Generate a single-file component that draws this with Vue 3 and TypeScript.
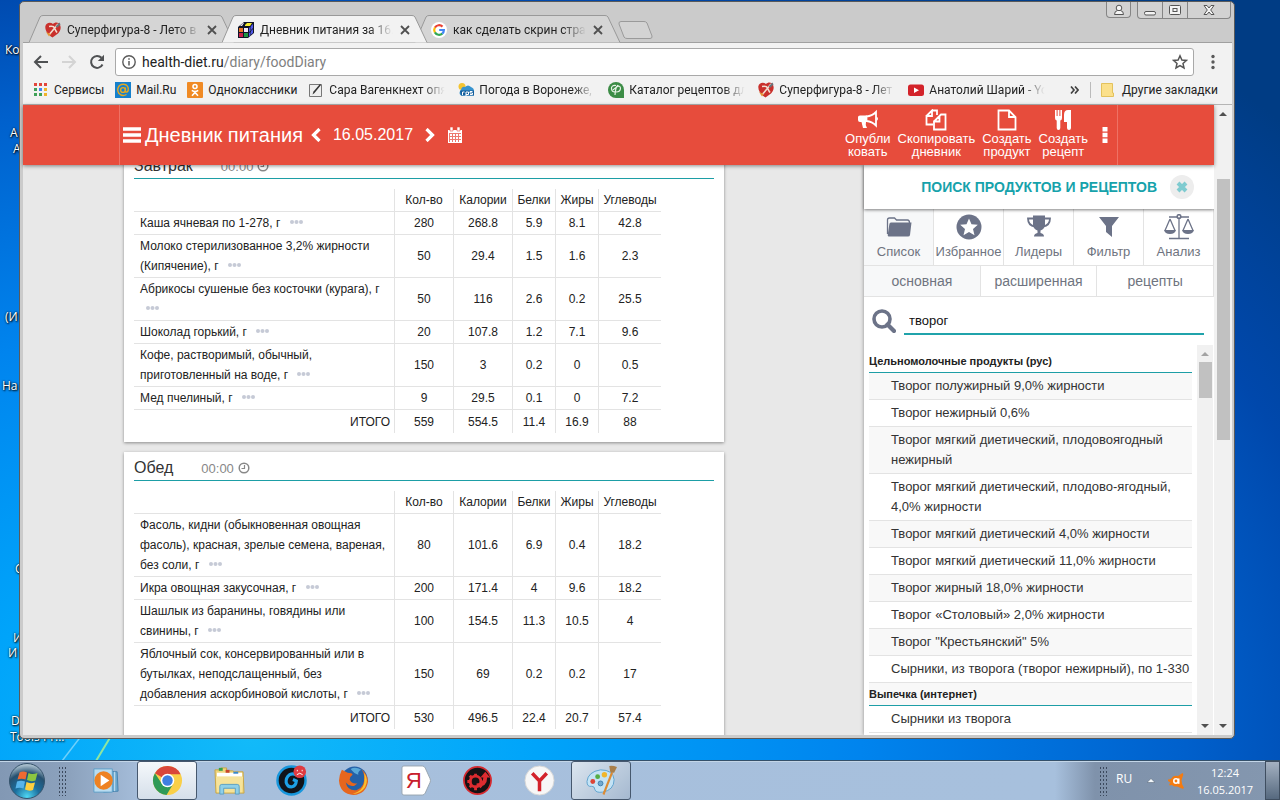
<script setup lang="ts">
import { ref } from 'vue'

interface Food { name: string; v: string[] }
interface Meal { title: string; foods: Food[]; total: string[] }

const columns = ['Кол-во', 'Калории', 'Белки', 'Жиры', 'Углеводы']

const meals: Meal[] = [
  {
    title: 'Завтрак',
    foods: [
      { name: 'Каша ячневая по 1-278, г', v: ['280', '268.8', '5.9', '8.1', '42.8'] },
      { name: 'Молоко стерилизованное 3,2% жирности (Кипячение), г', v: ['50', '29.4', '1.5', '1.6', '2.3'] },
      { name: 'Абрикосы сушеные без косточки (курага), г', v: ['50', '116', '2.6', '0.2', '25.5'] },
      { name: 'Шоколад горький, г', v: ['20', '107.8', '1.2', '7.1', '9.6'] },
      { name: 'Кофе, растворимый, обычный, приготовленный на воде, г', v: ['150', '3', '0.2', '0', '0.5'] },
      { name: 'Мед пчелиный, г', v: ['9', '29.5', '0.1', '0', '7.2'] },
    ],
    total: ['559', '554.5', '11.4', '16.9', '88'],
  },
  {
    title: 'Обед',
    foods: [
      { name: 'Фасоль, кидни (обыкновенная овощная фасоль), красная, зрелые семена, вареная, без соли, г', v: ['80', '101.6', '6.9', '0.4', '18.2'] },
      { name: 'Икра овощная закусочная, г', v: ['200', '171.4', '4', '9.6', '18.2'] },
      { name: 'Шашлык из баранины, говядины или свинины, г', v: ['100', '154.5', '11.3', '10.5', '4'] },
      { name: 'Яблочный сок, консервированный или в бутылках, неподслащенный, без добавления аскорбиновой кислоты, г', v: ['150', '69', '0.2', '0.2', '17'] },
    ],
    total: ['530', '496.5', '22.4', '20.7', '57.4'],
  },
]

const groups = [
  {
    title: 'Цельномолочные продукты (рус)',
    items: [
      'Творог полужирный 9,0% жирности',
      'Творог нежирный 0,6%',
      'Творог мягкий диетический, плодовоягодный нежирный',
      'Творог мягкий диетический, плодово-ягодный, 4,0% жирности',
      'Творог мягкий диетический 4,0% жирности',
      'Творог мягкий диетический 11,0% жирности',
      'Творог жирный 18,0% жирности',
      'Творог «Столовый» 2,0% жирности',
      'Творог "Крестьянский" 5%',
      'Сырники, из творога (творог нежирный), по 1-330',
    ],
  },
  { title: 'Выпечка (интернет)', items: ['Сырники из творога'] },
]

const tabs = [
  { id: 'super', text: 'Суперфигура-8 - Лето в' },
  { id: 'cube', text: 'Дневник питания за 16.0' },
  { id: 'google', text: 'как сделать скрин стран' },
]

const bookmarks = [
  { id: 'apps', text: 'Сервисы', long: false },
  { id: 'mail', text: 'Mail.Ru', long: false },
  { id: 'ok', text: 'Одноклассники', long: false },
  { id: 'pen', text: 'Сара Вагенкнехт опя', long: true },
  { id: 'rp5', text: 'Погода в Воронеже,', long: true },
  { id: 'cat', text: 'Каталог рецептов дл', long: true },
  { id: 'super', text: 'Суперфигура-8 - Лет', long: true },
  { id: 'yt', text: 'Анатолий Шарий - Yo', long: true },
]

const searchTabs = [
  { id: 'list', text: 'Список' },
  { id: 'fav', text: 'Избранное' },
  { id: 'lead', text: 'Лидеры' },
  { id: 'filter', text: 'Фильтр' },
  { id: 'scale', text: 'Анализ' },
]
const modes = ['основная', 'расширенная', 'рецепты']

const actions = [
  { id: 'horn', a: 'Опубли', b: 'ковать' },
  { id: 'copy', a: 'Скопировать', b: 'дневник' },
  { id: 'file', a: 'Создать', b: 'продукт' },
  { id: 'food', a: 'Создать', b: 'рецепт' },
]

const shortcuts = [
  { text: 'Ко', x: 5, y: 42 },
  { text: 'А', x: 10, y: 125 },
  { text: 'А', x: 13, y: 141 },
  { text: '(И', x: 5, y: 309 },
  { text: 'На', x: 2, y: 378 },
  { text: 'С', x: 15, y: 561 },
  { text: 'И', x: 13, y: 630 },
  { text: 'И', x: 8, y: 645 },
  { text: 'D', x: 11, y: 713 },
  { text: 'Tools Pr...', x: 10, y: 729 },
]

const apps = [
  { id: 'wmp', name: 'Проигрыватель', on: '' },
  { id: 'chrome', name: 'Google Chrome', on: 'front' },
  { id: 'explorer', name: 'Проводник', on: '' },
  { id: 'cc', name: 'Очистка', on: '' },
  { id: 'firefox', name: 'Firefox', on: '' },
  { id: 'ya', name: 'Яндекс', on: '' },
  { id: 'gear', name: 'Обновление', on: '' },
  { id: 'ybr', name: 'Яндекс.Браузер', on: '' },
  { id: 'paint', name: 'Paint', on: 'back' },
]

const query = ref('творог')
const activeTab = ref('list')
const activeMode = ref('основная')
</script>

<template>
  <div class="desktop" lang="ru">
    <svg class="streaks" viewBox="0 0 200 60" aria-hidden="true">
      <path d="M62 60L108 0" stroke="#6fd0fb" stroke-width="1.5" />
      <path d="M96 60L132 0" stroke="#8fe6a0" stroke-width="2" />
    </svg>
    <span
      v-for="(s, i) in shortcuts"
      :key="i"
      class="shortcut"
      :style="{ left: s.x + 'px', top: s.y + 'px' }"
    >{{ s.text }}</span>

    <div class="workspace">
      <section class="window">
        <div class="strip">
          <div v-for="t in tabs" :key="t.id" class="tab" :class="{ current: t.id === 'cube' }">
            <svg class="tab-shape" viewBox="0 0 206 28" preserveAspectRatio="none" aria-hidden="true">
              <path d="M0 27.5L11 2Q12 .5 14 .5H190Q192 .5 193 2L205 27.5" />
            </svg>
            <svg v-if="t.id === 'super'" class="fav" viewBox="0 0 16 16"><path d="M7.500 15.500C3 13 0 9 .3 4.500 1 .5 5.500 0 8 2 10 0 12 0 14 1.500 17 5 15.500 9 13 11.500z" fill="#c9302c" /><path d="M4 4.500Q8.500 3.500 9.500 6T12 10.500M3.500 13.500L13 2" stroke="#f2dcd0" stroke-width="1.600" fill="none" /><path d="M1 10l3 4.500L6 12z" fill="#e39336" /><path d="M10.500 4.500l4-4 1 2-3 3z" fill="#69737a" /></svg>
            <svg v-else-if="t.id === 'cube'" class="fav" viewBox="0 0 16 16"><path d="M0 5L6 0H16V11L10 16H0z" fill="#101428" /><path d="M1 6h4v4H1z" fill="#e87722" /><path d="M6 6h4v4H6z" fill="#f4e8f8" /><path d="M1 11h4v4H1z" fill="#c81f4a" /><path d="M6 11h4v4H6z" fill="#1f9440" /><path d="M7 3l2-2h5l-2 3H7z" fill="#f5ec2e" /><path d="M2 4l3-3 1 0-2 3z" fill="#f4e8f8" /><path d="M11 6l1.500-1.500V9L11 10zM13 4l2-2v4l-2 2zM11 11l1.500-1v3L11 15zM13 9l2-2v4l-2 1.500z" fill="#5058e8" /></svg>
            <svg v-else class="fav" viewBox="0 0 16 16"><circle cx="8" cy="8" r="8" fill="#fff" /><g fill="none" stroke-width="2.200"><path d="M11.500 4.600A4.900 4.900 0 0 0 3.900 5.600" stroke="#ea4335" /><path d="M3.900 5.500A4.900 4.900 0 0 0 3.900 10.500" stroke="#fbbc05" /><path d="M3.900 10.400A4.900 4.900 0 0 0 11.300 11.600" stroke="#34a853" /><path d="M11.200 11.700A4.900 4.900 0 0 0 12.900 8H8.200" stroke="#4285f4" /></g></svg>
            <span class="tab-text">{{ t.text }}</span>
            <button class="tab-close" aria-label="Закрыть вкладку"><svg viewBox="0 0 10 10"><path d="M1 1L9 9M9 1L1 9" stroke="#505050" stroke-width="1.800" /></svg></button>
          </div>
          <button class="new-tab" aria-label="Новая вкладка"><svg viewBox="0 0 36 18"><path d="M3 .5H26Q28 .5 29 2L34 15Q34.500 17.500 32 17.500H9Q7 17.500 6 16L1 3Q.5 .5 3 .5z" fill="#d3d3d3" stroke="#9a9a9a" /></svg></button>
          <div class="caption">
            <button class="user" aria-label="Пользователь"><svg viewBox="0 0 12 12"><circle cx="6" cy="4" r="2.800" /><path d="M1.500 10.500Q1.500 7 4.500 6.500H7.500Q10.500 7 10.500 10.500z" /></svg></button>
            <div class="trio">
              <button aria-label="Свернуть"><svg viewBox="0 0 12 12"><rect x=".5" y="7.500" width="11" height="3.500" rx="1.500" /></svg></button>
              <button aria-label="Свернуть в окно"><svg viewBox="0 0 12 12"><rect x=".5" y="1.500" width="11" height="9" rx="1" /><rect x="4" y="4.500" width="4" height="3" /></svg></button>
              <button class="x" aria-label="Закрыть"><svg viewBox="0 0 12 12"><path d="M1 1.500H4L6 4 8 1.500H11L7.700 6 11 10.500H8L6 8 4 10.500H1L4.300 6z" /></svg></button>
            </div>
          </div>
        </div>

        <nav class="toolbar">
          <button aria-label="Назад"><svg viewBox="0 0 16 16"><path d="M15 8H2M8 2L2 8L8 14" fill="none" stroke="#4f5153" stroke-width="2" /></svg></button>
          <button aria-label="Вперёд"><svg viewBox="0 0 16 16"><path d="M1 8H14M8 2L14 8L8 14" fill="none" stroke="#d4d4d4" stroke-width="2" /></svg></button>
          <button aria-label="Обновить"><svg viewBox="0 0 16 16"><path d="M13.500 10.500A6 6 0 1 1 12.500 3.800" fill="none" stroke="#4f5153" stroke-width="2" /><path d="M15 .800V7H8.800z" fill="#4f5153" /></svg></button>
          <div class="address">
            <svg class="info" viewBox="0 0 14 14"><circle cx="7" cy="7" r="6.200" fill="none" stroke="#5a5a5a" stroke-width="1.400" /><path d="M7 6V10.500M7 3.300V4.800" stroke="#5a5a5a" stroke-width="1.500" /></svg>
            <a href="#" class="url">health-diet.ru<span>/diary/foodDiary</span></a>
            <svg class="star" viewBox="0 0 16 16"><path d="M8 1.800L9.900 6 14.400 6.400 11 9.400 12 13.900 8 11.500 4 13.900 5 9.400 1.600 6.400 6.100 6z" fill="none" stroke="#555" stroke-width="1.500" /></svg>
          </div>
          <button class="menu" aria-label="Меню"><svg viewBox="0 0 16 16"><circle cx="8" cy="2.500" r="1.700" fill="#5a5a5a" /><circle cx="8" cy="8" r="1.700" fill="#5a5a5a" /><circle cx="8" cy="13.500" r="1.700" fill="#5a5a5a" /></svg></button>
        </nav>

        <div class="bookmarks">
          <a v-for="b in bookmarks" :key="b.text" href="#" class="bm" :class="{ long: b.long }">
            <svg v-if="b.id === 'apps'" viewBox="0 0 16 16"><path d="M1 1h3v3H1zM6 1h3v3H6zM11 1h3v3h-3z" fill="#e2453b" /><path d="M1 6h3v3H1z" fill="#3fa057" /><path d="M6 6h3v3H6z" fill="#4285f4" /><path d="M11 6h3v3h-3z" fill="#f0b429" /><path d="M1 11h3v3H1zM6 11h3v3H6z" fill="#3fa057" /><path d="M11 11h3v3h-3z" fill="#f0b429" /></svg>
            <svg v-else-if="b.id === 'mail'" viewBox="0 0 16 16"><path d="M0 0h16v16H0z" fill="#1680cc" /><g fill="none" stroke="#e8a920" stroke-width="1.400"><circle cx="8" cy="8" r="2.400" /><path d="M10.400 5.500V9.500Q11.500 11 13 9 14 5 11.500 3.200 8 1 4.500 3.500 1.500 7 3.600 11 7 15 11.500 12.500" /></g></svg>
            <svg v-else-if="b.id === 'ok'" viewBox="0 0 16 16"><rect width="16" height="16" rx="1" fill="#f08a24" /><g fill="none" stroke="#fff" stroke-width="1.600"><circle cx="8" cy="4.500" r="2" /><path d="M4.800 8.300Q8 10.600 11.200 8.300M8 9.500V10.500M5 13.700L8 10.500L11 13.700" /></g></svg>
            <svg v-else-if="b.id === 'pen'" viewBox="0 0 16 16"><path d="M1.500 2.500h12v12h-12z" fill="#eee" stroke="#777" /><path d="M4.500 12.500L5.500 9.500 12 2 13 3 6.500 11z" fill="#333" /></svg>
            <svg v-else-if="b.id === 'rp5'" viewBox="0 0 16 16"><circle cx="4" cy="4.500" r="3.500" fill="#f4c430" /><path d="M3 8Q4 4 7 5 10 2 13 5 16 6 16 9V13.500H3Q0 11 3 8z" fill="#3793cf" /><path d="M2 8.500h14v5H3z" fill="#135d9c" /><path d="M4.500 13V10H6.500M8 14V10H10.500V12.500H8M14.500 9.500H12V11H14.500V12.500H12" fill="none" stroke="#fff" /></svg>
            <svg v-else-if="b.id === 'cat'" viewBox="0 0 16 16"><path d="M8 0a8 8 0 1 0 0 16h8V8a8 8 0 0 0-8-8z" fill="#3c8c46" /><path d="M8 3.500Q3 3 3.500 7 4 10.500 8 10 12.500 10 12.500 6 12 3 8.500 5 7.500 7 7 13M5 8Q8 6 10 3" fill="none" stroke="#e7f3e7" stroke-width="1.200" /></svg>
            <svg v-else-if="b.id === 'super'" viewBox="0 0 16 16"><path d="M7.500 15.500C3 13 0 9 .3 4.500 1 .5 5.500 0 8 2 10 0 12 0 14 1.500 17 5 15.500 9 13 11.500z" fill="#c9302c" /><path d="M4 4.500Q8.500 3.500 9.500 6T12 10.500M3.500 13.500L13 2" stroke="#f2dcd0" stroke-width="1.600" fill="none" /><path d="M1 10l3 4.500L6 12z" fill="#e39336" /><path d="M10.500 4.500l4-4 1 2-3 3z" fill="#69737a" /></svg>
            <svg v-else viewBox="0 0 16 16"><rect y="2.500" width="16" height="11.500" rx="2.500" fill="#d3232a" /><path d="M6 5.500L11 8.200L6 11z" fill="#fff" /></svg>
            <span>{{ b.text }}</span>
          </a>
          <button class="more" aria-label="Ещё закладки"><svg viewBox="0 0 9 8"><path d="M1 .5L4 4L1 7.500M5 .5L8 4L5 7.500" fill="none" stroke="#444" stroke-width="1.700" /></svg></button>
          <a href="#" class="bm other">
            <svg viewBox="0 0 16 16"><path d="M.5 1.500h11v9.500h1v3.500H.5z" fill="#fbe08b" stroke="#e3c25c" /></svg>
            <span>Другие закладки</span>
          </a>
        </div>

        <div class="viewport">
          <div class="page">
            <header class="top">
              <div class="top-in">
                <button class="burger" aria-label="Меню дневника"><svg viewBox="0 0 18 16"><path d="M0 2h18M0 8h18M0 14h18" stroke="#fff" stroke-width="3.400" /></svg></button>
                <h1>Дневник питания</h1>
                <button class="arrow" aria-label="Предыдущий день"><svg viewBox="0 0 12 14"><path d="M9.500 1L3.500 7L9.500 13" fill="none" stroke="#fff" stroke-width="3.200" /></svg></button>
                <span class="date">16.05.2017</span>
                <button class="arrow" aria-label="Следующий день"><svg viewBox="0 0 12 14"><path d="M2.500 1L8.500 7L2.500 13" fill="none" stroke="#fff" stroke-width="3.200" /></svg></button>
                <button class="cal" aria-label="Календарь"><svg viewBox="0 0 16 16"><path d="M1 3h14v13H1z" fill="#fff" /><path d="M3 0h3v4H3zM10 0h3v4h-3z" fill="#fff" stroke="#e74c3c" stroke-width=".6" /><path d="M2.500 6v9M5.500 6v9M8.500 6v9M11.500 6v9M2 6.500h12M2 9.500h12M2 12.500h12" stroke="#e74c3c" stroke-width="1" opacity=".75" /></svg></button>
                <div class="actions">
                  <button v-for="a in actions" :key="a.id">
                    <svg v-if="a.id === 'horn'" viewBox="0 0 22 22"><path d="M19 3V16.500Q15 12.500 9.500 12V7.500Q15 7 19 3z" fill="none" stroke="#fff" stroke-width="1.800" /><path d="M19.500 7.500q3 2 0 4.500z" fill="#fff" /><path d="M10 6.500H3Q1 6.500 1 8v3q0 2 2 2h1.500l1.500 6h4q-2-3-1-6h1z" fill="#fff" /></svg>
                    <svg v-else-if="a.id === 'copy'" viewBox="0 0 22 22"><path d="M7 1.500H12V6M1.500 7L7 1.500V7H1.500V15.500H8M9 12.500L14.500 7V12.500H9V20.500H20.500V5.500H16L14.500 7" fill="none" stroke="#fff" stroke-width="1.800" /></svg>
                    <svg v-else-if="a.id === 'file'" viewBox="0 0 22 22"><path d="M2.500 1.500H13L19.500 8V20.500H2.500zM13 1.500V8H19.500" fill="none" stroke="#fff" stroke-width="1.800" /></svg>
                    <svg v-else viewBox="0 0 22 22"><path d="M3 1h1.600v6h1V1h1.800v6h1V1H10v8q0 2-1.700 2.500V19q0 2-1.800 2T4.700 19V11.500Q3 11 3 9zM19 1v18q0 2-2 2t-2-2v-6h-3V6q0-5 4-5z" fill="#fff" /></svg>
                    <span>{{ a.a }}<br>{{ a.b }}</span>
                  </button>
                  <button class="dots" aria-label="Ещё"><svg viewBox="0 0 6 16"><path d="M.5 0h5v4.500h-5zM.5 5.800h5v4.500h-5zM.5 11.500h5V16h-5z" fill="#fff" /></svg></button>
                </div>
              </div>
            </header>

            <div class="body">
              <main class="diary">
                <section v-for="m in meals" :key="m.title" class="card">
                  <div class="meal">
                    <h2>{{ m.title }}</h2>
                    <button class="time">00:00 <svg viewBox="0 0 12 12"><circle cx="6" cy="6" r="4.800" fill="none" stroke="#888" stroke-width="1.500" /><path d="M6.500 3V6.500H3.500" fill="none" stroke="#888" stroke-width="1.200" /></svg></button>
                  </div>
                  <table>
                    <colgroup><col class="c-name"><col class="c-mid"><col class="c-mid"><col class="c-sm"><col class="c-sm"><col class="c-last"></colgroup>
                    <thead><tr><th /><th v-for="c in columns" :key="c">{{ c }}</th></tr></thead>
                    <tbody>
                      <tr v-for="f in m.foods" :key="f.name">
                        <td class="name">{{ f.name }} <button aria-label="Действия"><svg viewBox="0 0 13 4"><circle cx="2" cy="2" r="2" /><circle cx="6.500" cy="2" r="2" /><circle cx="11" cy="2" r="2" /></svg></button></td>
                        <td v-for="(n, i) in f.v" :key="i">{{ n }}</td>
                      </tr>
                    </tbody>
                    <tfoot><tr><td class="sum">ИТОГО</td><td v-for="(n, i) in m.total" :key="i">{{ n }}</td></tr></tfoot>
                  </table>
                </section>
              </main>

              <aside class="side">
                <div class="side-head">
                  <h2>ПОИСК ПРОДУКТОВ И РЕЦЕПТОВ</h2>
                  <button aria-label="Закрыть поиск"><svg viewBox="0 0 12 12"><path d="M2 2L10 10M10 2L2 10" stroke="#7fcbd0" stroke-width="4" /></svg></button>
                </div>
                <div class="kinds">
                  <button v-for="t in searchTabs" :key="t.id" :class="{ on: activeTab === t.id }" @click="activeTab = t.id">
                    <svg v-if="t.id === 'list'" viewBox="0 0 32 26"><path d="M4.500 20V6q0-2 2-2h5l2 2h11q2 0 2 3" fill="none" stroke="#6c7388" stroke-width="1.300" /><path d="M8 8.500H28.500L27 21q-.2 1.500-2 1.500H6q-1.500 0-1.300-1.500L6.300 10.500Q6.500 8.500 8 8.500z" fill="#6c7388" /></svg>
                    <svg v-else-if="t.id === 'fav'" viewBox="0 0 32 26"><circle cx="16" cy="13" r="12.500" fill="#6c7388" /><path d="M16 4.500l2.500 5.800 6.300.5-4.800 4.200 1.500 6.200-5.500-3.300-5.500 3.300 1.500-6.200-4.800-4.200 6.300-.5z" fill="#fff" /></svg>
                    <svg v-else-if="t.id === 'lead'" viewBox="0 0 32 26"><path d="M10 1.500h12v10q-1 4-4.500 5v2.500q3.500.5 3.500 3.500H11q0-3 3.500-3.500v-2.500q-3.500-1-4.500-5z" fill="#6c7388" /><path d="M10 4.500H5q0 7 7 8M22 4.500h5q0 7-7 8" fill="none" stroke="#6c7388" stroke-width="1.800" /></svg>
                    <svg v-else-if="t.id === 'filter'" viewBox="0 0 32 26"><path d="M6 3H26L19 12V23L13 18V12z" fill="#6c7388" /></svg>
                    <svg v-else viewBox="0 0 32 26"><g fill="none" stroke="#6c7388" stroke-width="1.600"><circle cx="16" cy="2.500" r="1.800" /><path d="M16 4V24M6 24.500H26M6 3H14M18 3H26M7 5L2 16.500M7 5L12 16.500M25 5L20 16.500M25 5L30 16.500" stroke-width="1.300" /></g><path d="M1 16h12q-1 4-6 4t-6-4zM19 16h12q-1 4-6 4t-6-4z" fill="#6c7388" /></svg>
                    <span>{{ t.text }}</span>
                  </button>
                </div>
                <div class="modes">
                  <button v-for="m in modes" :key="m" :class="{ on: activeMode === m }" @click="activeMode = m">{{ m }}</button>
                </div>
                <div class="search">
                  <label for="q" aria-label="Поиск"><svg viewBox="0 0 24 24"><circle cx="10" cy="10" r="8" fill="none" stroke="#6c7388" stroke-width="3.600" /><path d="M15.500 15.500L22 22" stroke="#6c7388" stroke-width="4.200" stroke-linecap="round" /></svg></label>
                  <input id="q" v-model="query" type="text">
                </div>
                <div class="results">
                  <div class="list">
                    <section v-for="(g, gi) in groups" :key="g.title">
                      <h3 :class="{ tint: gi > 0 }">{{ g.title }}</h3>
                      <ul><li v-for="it in g.items" :key="it"><a href="#">{{ it }}</a></li></ul>
                    </section>
                  </div>
                  <div class="bar inner"><i class="up" /><b /><i class="down" /></div>
                </div>
              </aside>
            </div>
          </div>
          <div class="bar outer"><i class="up" /><b /><i class="down" /></div>
        </div>
      </section>
    </div>

    <footer class="taskbar">
      <button class="start" aria-label="Пуск">
        <svg viewBox="0 0 36 36">
          <defs><radialGradient id="orb" cx=".5" cy=".95" r=".9"><stop offset="0" stop-color="#4fd8f4" /><stop offset=".4" stop-color="#1b6f9e" /><stop offset=".75" stop-color="#26506f" /><stop offset="1" stop-color="#a5bccb" /></radialGradient></defs>
          <circle cx="18" cy="18" r="17.500" fill="url(#orb)" stroke="#35536c" />
          <path d="M10.500 9.500Q14 7.500 18 9.500L16.500 16.500Q12.500 15 8.500 16.500z" fill="#ee6a32" /><path d="M19.500 10Q23 12 28.500 10L26.500 17.500Q22 19 18 17z" fill="#8cc641" /><path d="M8 18.500Q12 17 16 18.500L14.500 25.500Q10.500 24 6.500 25.500z" fill="#57b4ea" /><path d="M17.500 19Q21 21 26 19.500L24 27Q20 28.500 16 26.500z" fill="#fccf3f" />
        </svg>
      </button>
      <span class="grip" />
      <div class="apps">
        <button v-for="a in apps" :key="a.id" :class="a.on" :aria-label="a.name">
          <svg v-if="a.id === 'wmp'" viewBox="0 0 32 32"><path d="M12 6l16 1 1 20-15 1z" fill="#6ba8cf" stroke="#4883ad" /><path d="M25.500 7v20" stroke="#cfe6f4" /><path d="M4 4h19v24H4z" fill="#b9dcf0" stroke="#5f9ec6" /><circle cx="14" cy="16" r="9.500" fill="#ee8222" /><path d="M11 10l9 6-9 6z" fill="#fff" /></svg>
          <svg v-else-if="a.id === 'chrome'" viewBox="0 0 32 32"><circle cx="16" cy="16" r="15" fill="#f9cf48" /><path d="M16 16L3 8.500A15 15 0 0 1 29.500 9.500H16z" fill="#d9463a" /><path d="M3 8.500A15 15 0 0 0 15 31L21.500 20 10 19z" fill="#2f9a57" /><circle cx="16" cy="16" r="7" fill="#fff" /><circle cx="16" cy="16" r="5.400" fill="#3f7fe0" /></svg>
          <svg v-else-if="a.id === 'explorer'" viewBox="0 0 32 32"><path d="M1 5h5l1-2h6v3h6l2 1h9l1 22H2z" fill="#efd67c" stroke="#c7a548" /><path d="M3 8h26v4H3z" fill="#fff" /><path d="M5 3h4v3H5z" fill="#38a14a" /><path d="M12 5h4v3h-4z" fill="#c8452d" /><path d="M20 7h5v2h-5z" fill="#3989c9" /><path d="M2 12h28l-1 16H3z" fill="#f6e39a" /><path d="M6 30V22q0-2 2-2h16q2 0 2 2v8h-4v-6H10v6z" fill="#8fd0e8" stroke="#5a9fc4" /></svg>
          <svg v-else-if="a.id === 'cc'" viewBox="0 0 32 32"><circle cx="16" cy="16" r="14.500" fill="#10141a" stroke="#1796dc" stroke-width="2.500" /><path d="M21 10.500Q18 8 14 10 10 13 10.500 18 12 23 16.500 22.500 20.500 21.500 21 16.500L17.500 15" fill="none" stroke="#1da0e6" stroke-width="3.200" /><circle cx="24.500" cy="7" r="6.500" fill="#e03a40" /><path d="M22 5v1.500M27 5v1.500M21.500 10q3-3 6 0" stroke="#fff" fill="none" /></svg>
          <svg v-else-if="a.id === 'firefox'" viewBox="0 0 32 32"><circle cx="17" cy="15" r="13.500" fill="#2461a8" /><path d="M13 4Q18 1 24 5 20 7 21 10 17 9 13 4z" fill="#59a8d8" /><path d="M4 5Q8 7 10 8 15 8 15 10 12 12 12 15 14 20 20 19 14 25 8 18 10 27 19 26 28 23 27 11 26 6 24 4 31 10 31 17 29 30 16 31 2 30 1 16 1 11 4 5z" fill="#e6661e" /><path d="M27 8Q32 15 28 23 23 30 15 30 25 27 27 19 28 14 27 8z" fill="#f9c22f" /></svg>
          <svg v-else-if="a.id === 'ya'" viewBox="0 0 32 32"><path d="M4 1h19q2 0 3 2l5 11q1 2 0 4l-5 11q-1 2-3 2H4q-2 0-2-2V3q0-2 2-2z" fill="#fff" stroke="#98a4b0" /><text x="6" y="24" font-size="23" fill="#c8202c" font-family="Liberation Sans">Я</text></svg>
          <svg v-else-if="a.id === 'gear'" viewBox="0 0 32 32"><circle cx="16" cy="16" r="14" fill="#161214" stroke="#d62a30" stroke-width="1.800" /><circle cx="14" cy="17" r="5.500" fill="none" stroke="#dd2c30" stroke-width="3" /><path d="M14 9v3M14 22v4M5.500 17h4M8 11l2 2M8 23l2-2M20 23l-2-2" stroke="#dd2c30" stroke-width="3" /><path d="M15 19Q22 19 22 13h-3l5-6 5 6h-3q0 10-11 10z" fill="#dd2c30" /></svg>
          <svg v-else-if="a.id === 'ybr'" viewBox="0 0 32 32"><circle cx="16" cy="16" r="15" fill="#f7f7f7" stroke="#d6d6d6" /><path d="M8.500 8.500L16 16.500L23.500 8.500M16 16V27" fill="none" stroke="#d3222b" stroke-width="3.600" /></svg>
          <svg v-else viewBox="0 0 32 32"><path d="M1 17Q2 7 15 5 28 5 29 15 29 26 17 28 10 29 9 25 9 22 6 22 1 23 1 17z" fill="#c4e3f5" stroke="#5fa3ce" /><circle cx="7" cy="17" r="2.500" fill="#dc4436" /><circle cx="12" cy="12" r="2.500" fill="#54ad46" /><circle cx="19" cy="10" r="2.800" fill="#f0b62c" /><circle cx="15" cy="19" r="2.500" fill="#70a9d0" stroke="#4080ae" /><path d="M26 7L28 8L19 31L17 30z" fill="#dc8b33" /><path d="M24 1q3-1 8 1l-3 6q-3 0-4-1z" fill="#a97f4a" /></svg>
        </button>
      </div>
      <div class="tray">
        <span class="grip" />
        <span class="lang">RU</span>
        <button class="hidden-icons" aria-label="Скрытые значки"><svg viewBox="0 0 8 5"><path d="M0 4.500L4 .5L8 4.500z" fill="#f4f8fb" stroke="#4d5c6e" stroke-width=".5" /></svg></button>
        <svg class="avast" viewBox="0 0 18 18"><path d="M1 7.500Q4 8 6 4.500 8 3.500 11 4L15.500 1Q17 2 15.500 5L14.500 8.500Q15 10 15 12L17 16Q16 17.500 13.500 16L10 14.500Q7 15 5 13L2.500 13.500Q1.500 12.500 3.500 10.500L1 9z" fill="#f37b11" /><circle cx="9" cy="9" r="2.200" fill="none" stroke="#fff" stroke-width="1.600" /><path d="M11.700 6.500V11.800" stroke="#fff" stroke-width="1.600" /></svg>
        <time class="clock">12:24<br>16.05.2017</time>
        <button class="show" aria-label="Показать рабочий стол" />
      </div>
    </footer>
  </div>
</template>

<style>
body { overflow: hidden; }
</style>

<style scoped>
* { box-sizing: border-box; }
button { appearance: none; border: 0; padding: 0; background: none; font: inherit; color: inherit; display: inline-flex; align-items: center; justify-content: center; }
a { color: inherit; text-decoration: none; }
h1, h2, h3, ul { margin: 0; padding: 0; font-weight: 400; list-style: none; }
svg { display: block; flex: none; }

.desktop {
  position: relative; height: 100vh; display: flex; flex-direction: column; overflow: hidden;
  font-family: "Open Sans", "Noto Sans", sans-serif; font-size: 12px;
  background: radial-gradient(ellipse 1300px 900px at 250px 740px, #12baf9 0%, #00a4fa 22%, #0084ee 47%, #0060cc 72%, #0048ac 86%, #003c84 105%);
}
.streaks { position: absolute; left: 0; bottom: 39px; width: 200px; height: 60px; }
.shortcut { position: absolute; color: #fff; line-height: 16px; white-space: nowrap; text-shadow: 1px 1px 2px #000, 0 0 2px #000; }
.workspace { flex: 1; min-height: 0; padding: 1px 45px 21px 19px; }
.window {
  position: relative; height: 100%; display: flex; flex-direction: column; overflow: hidden;
  border: 1px solid #5a5a5a; border-radius: 5px; padding: 0 2px 3px 3px; background: #cbcbcb;
  font-family: Roboto, "Open Sans", sans-serif;
}

.strip { flex: none; height: 41px; display: flex; align-items: flex-end; padding-left: 6px; box-shadow: inset 0 -1px #a0a0a0; }
.tab { position: relative; width: 206px; height: 28px; margin-right: -13px; display: flex; align-items: center; padding: 1px 15px 0 16px; }
.tab.current { z-index: 1; }
.tab-shape { position: absolute; left: 0; top: 0; width: 100%; height: 100%; }
.tab-shape path { fill: #d5d5d5; stroke: #999; }
.current .tab-shape path { fill: #f2f2f2; }
.tab > * { position: relative; }
.tab > .tab-shape { position: absolute; }
.fav { width: 16px; height: 16px; margin-right: 6px; }
.tab-text { flex: 1; min-width: 0; overflow: hidden; white-space: nowrap; color: #222; mask-image: linear-gradient(90deg, #000 82%, transparent); }
.tab-close { width: 16px; margin-left: 4px; }
.tab-close svg { width: 10px; height: 10px; }
.new-tab { align-self: flex-end; margin: 0 0 4px 10px; }
.new-tab svg { width: 36px; height: 18px; }
.caption { margin-left: auto; align-self: flex-start; display: flex; gap: 6px; }
.caption svg { width: 12px; height: 12px; fill: #f4f4f4; stroke: #555; }
.caption button { height: 16px; }
.trio { border: 1px solid #858585; border-top: 0; border-radius: 0 0 4px 4px; background: #d2d2d2; }
.caption .user { width: 25px; border: 1px solid #858585; border-top: 0; border-radius: 0 0 4px 4px; background: #d2d2d2; }
.trio { display: flex; margin-right: 1px; }
.trio button { width: 25px; border-right: 1px solid #858585; }
.trio .x { width: 42px; border-right: 0; }

.toolbar { flex: none; display: flex; align-items: center; padding: 5px 0 0 4px; background: #f2f2f2; }
.toolbar button { width: 28px; height: 28px; }
.toolbar button svg { width: 16px; height: 16px; }
.toolbar .menu { width: 38px; }
.address { flex: 1; height: 28px; margin-left: 4px; display: flex; align-items: center; gap: 6px; padding: 0 5px 0 6px; background: #fff; border: 1px solid #a9a9a9; border-radius: 3px; }
.info { width: 14px; height: 14px; }
.star { width: 16px; height: 16px; margin-left: auto; }
.url { font-size: 14px; color: #222; }
.url span { color: #808080; }
.bookmarks { flex: none; height: 29px; display: flex; align-items: center; gap: 11px; padding: 0 14px 0 10px; background: #f2f2f2; border-bottom: 1px solid #b5b5b5; color: #222; white-space: nowrap; }
.bm { display: flex; align-items: center; gap: 5px; }
.bm svg { width: 16px; height: 16px; }
.long span { width: 118px; overflow: hidden; mask-image: linear-gradient(90deg, #000 80%, transparent 98%); }
.more { margin-left: auto; }
.more svg { width: 9px; height: 8px; }
.other { height: 16px; border-left: 1px solid #bbb; padding-left: 10px; }

.viewport { flex: 1; min-height: 0; display: flex; font-family: "Liberation Sans", Arial, sans-serif; }
.page { flex: 1; min-width: 0; display: flex; flex-direction: column; background: #e8e8e8; }
.top { position: relative; z-index: 2; flex: none; height: 60px; background: #e74c3c; color: #fff; box-shadow: 0 1px 4px rgba(0, 0, 0, .45); }
.top-in { max-width: 999px; height: 100%; margin: 0 auto; padding: 0 3px; display: flex; align-items: center; border: solid #ee7265; border-width: 0 1px; }
.burger svg { width: 18px; height: 16px; }
h1 { margin: 0 7px 0 4px; font-size: 20px; }
.arrow svg { width: 12px; height: 14px; }
.date { margin: 0 11px; font-size: 16px; }
.cal { margin-left: 11px; }
.cal svg { width: 16px; height: 16px; }
.actions { margin-left: auto; display: flex; gap: 7px; align-items: center; font-size: 13px; line-height: 13px; }
.actions button { flex-direction: column; gap: 1px; padding-bottom: 4px; text-align: center; }
.actions svg { width: 22px; height: 22px; }
.actions .dots { width: 19px; padding: 0; }
.actions .dots svg { width: 6px; height: 16px; }

.body { flex: 1; min-height: 0; display: flex; justify-content: space-between; overflow: hidden; }
.diary { width: 600px; margin: -15px 0 0 101px; display: flex; flex-direction: column; gap: 10px; }
.card { flex: none; padding: 0 10px 9px; background: #fff; box-shadow: 0 1px 3px rgba(0, 0, 0, .4); }
.meal { height: 29px; display: flex; align-items: center; padding-top: 4px; border-bottom: 1px solid #1d9ea6; color: #333; }
h2 { font-size: 16px; }
.time { margin-left: 28px; gap: 4px; font-size: 13px; color: #888; }
.time svg { width: 12px; height: 12px; }
table { width: 527px; margin-top: 10px; table-layout: fixed; border-collapse: separate; border-spacing: 0; font-size: 12px; line-height: 20px; color: #222; }
.c-name { width: 260px; }
.c-mid { width: 59px; }
.c-sm { width: 43px; }
.c-last { width: 63px; }
th, td { height: 23px; padding: 1px 0; font-weight: 400; text-align: center; border-bottom: 1px solid #e3e3e3; }
th + th, td + td { border-left: 1px solid #e3e3e3; }
tfoot td { border-bottom: 0; }
td.name { padding: 1px 4px 1px 6px; text-align: left; }
.name button { margin-left: 6px; vertical-align: 3px; }
.name svg { width: 13px; height: 4px; fill: #c6cad6; }
td.sum { padding-right: 4px; text-align: right; }

.side { position: relative; width: 350px; display: flex; flex-direction: column; background: #fff; color: #6f7480; box-shadow: 0 0 4px rgba(0, 0, 0, .4); }
.side-head { position: relative; z-index: 1; flex: none; height: 44px; display: flex; align-items: center; justify-content: flex-end; gap: 13px; padding: 0 20px 0 0; background: #fff; box-shadow: 0 1px 3px rgba(0, 0, 0, .5); }
.side-head h2 { font-size: 14px; font-weight: 700; color: #16a2ab; }
.side-head button { width: 24px; height: 24px; border-radius: 50%; background: #ededed; }
.side-head button svg { width: 12px; height: 12px; }
.kinds { flex: none; display: grid; grid-template-columns: repeat(5, 1fr); font-size: 13px; }
.kinds button, .modes button { border: solid #e3e3e3; border-width: 0 1px 1px 0; }
.kinds button { flex-direction: column; height: 57px; gap: 3px; line-height: 18px; }
.kinds svg { width: 32px; height: 26px; }
.modes { flex: none; display: grid; grid-template-columns: repeat(3, 1fr); font-size: 14px; }
.modes button { height: 31px; }
.on { background: #f7f8f9; }
.search { flex: none; height: 48px; display: flex; align-items: center; gap: 8px; padding: 0 10px 0 8px; }
.search svg { width: 24px; height: 24px; }
.search input { flex: 1; min-width: 0; height: 28px; border: 0; border-bottom: 2px solid #20a3ab; padding: 0 5px; outline: 0; background: #fff; color: #111; font: 13px "Liberation Sans", Arial, sans-serif; }
.results { flex: 1; min-height: 0; display: flex; padding-left: 5px; color: #333; }
.list { flex: 1; min-width: 0; overflow: hidden; padding-top: 5px; margin-right: 5px; font-size: 13px; line-height: 20px; }
h3 { height: 23px; font-size: 11px; line-height: 22px; font-weight: 700; color: #222; border-bottom: 1px solid #1d9ea6; }
.tint, li:nth-child(odd) { background: #f8f8f8; }
section + section li:nth-child(odd) { background: #fff; }
li { padding: 3px 0 3px 22px; border-bottom: 1px solid #e3e3e3; }
li a { display: block; }

.bar { flex: none; display: flex; flex-direction: column; align-items: center; background: #f1f1f1; }
.bar b { width: 13px; background: #c1c1c1; }
.bar i { width: 0; height: 0; border: solid transparent; border-width: 0 4px; flex: none; }
.bar .up { border-bottom: 4px solid #505050; margin: 7px 0 6px; }
.bar .down { border-top: 4px solid #505050; margin: auto 0 7px; }
.outer { width: 18px; }
.outer b { margin-top: 57px; flex: 0 1 261px; }
.inner { width: 16px; margin-right: 1px; }
.inner .up { border-bottom-color: #a3a3a3; }
.inner b { height: 36px; }

.taskbar { position: relative; flex: none; height: 40px; display: flex; align-items: stretch; border-top: 1px solid #34506a; box-shadow: inset 0 1px #c3d6e8; background: linear-gradient(90deg, #8298b4 0, #8ca2bd 70px, #a7bfdc 145px, #a7c0dd calc(100% - 225px), #7f92ab calc(100% - 185px), #8497af 100%); }
.start { width: 54px; }
.start svg { width: 36px; height: 36px; }
.grip { width: 9px; height: 30px; margin: 5px 4px; flex: none; background: radial-gradient(circle, #3c4a5e 1px, transparent 1px) 0 0 / 3px 4px; }
.apps { display: flex; margin-left: 3px; }
.apps button { width: 60px; margin: 0 1px; }
.apps svg { width: 31px; height: 31px; }
.apps .front { border: 1px solid #46586e; border-radius: 3px; background: linear-gradient(#f5f8fb, #d5dfea); }
.apps .back { border: 1px solid #46586e; border-radius: 3px; background: linear-gradient(135deg, #dbe5ef, #a5b9d0); }
.tray { margin-left: auto; display: flex; align-items: center; color: #fff; font-size: 11px; }
.lang { width: 31px; padding-left: 4px; margin-bottom: 4px; font-size: 12px; }
.hidden-icons { width: 16px; }
.hidden-icons svg { width: 8px; height: 5px; }
.avast { width: 18px; height: 18px; margin-left: 8px; }
.clock { width: 80px; text-align: center; line-height: 17px; }
.show { align-self: stretch; width: 15px; border: 1px solid #3f4e60; background: linear-gradient(#a4b1c1, #56697f); }
</style>
